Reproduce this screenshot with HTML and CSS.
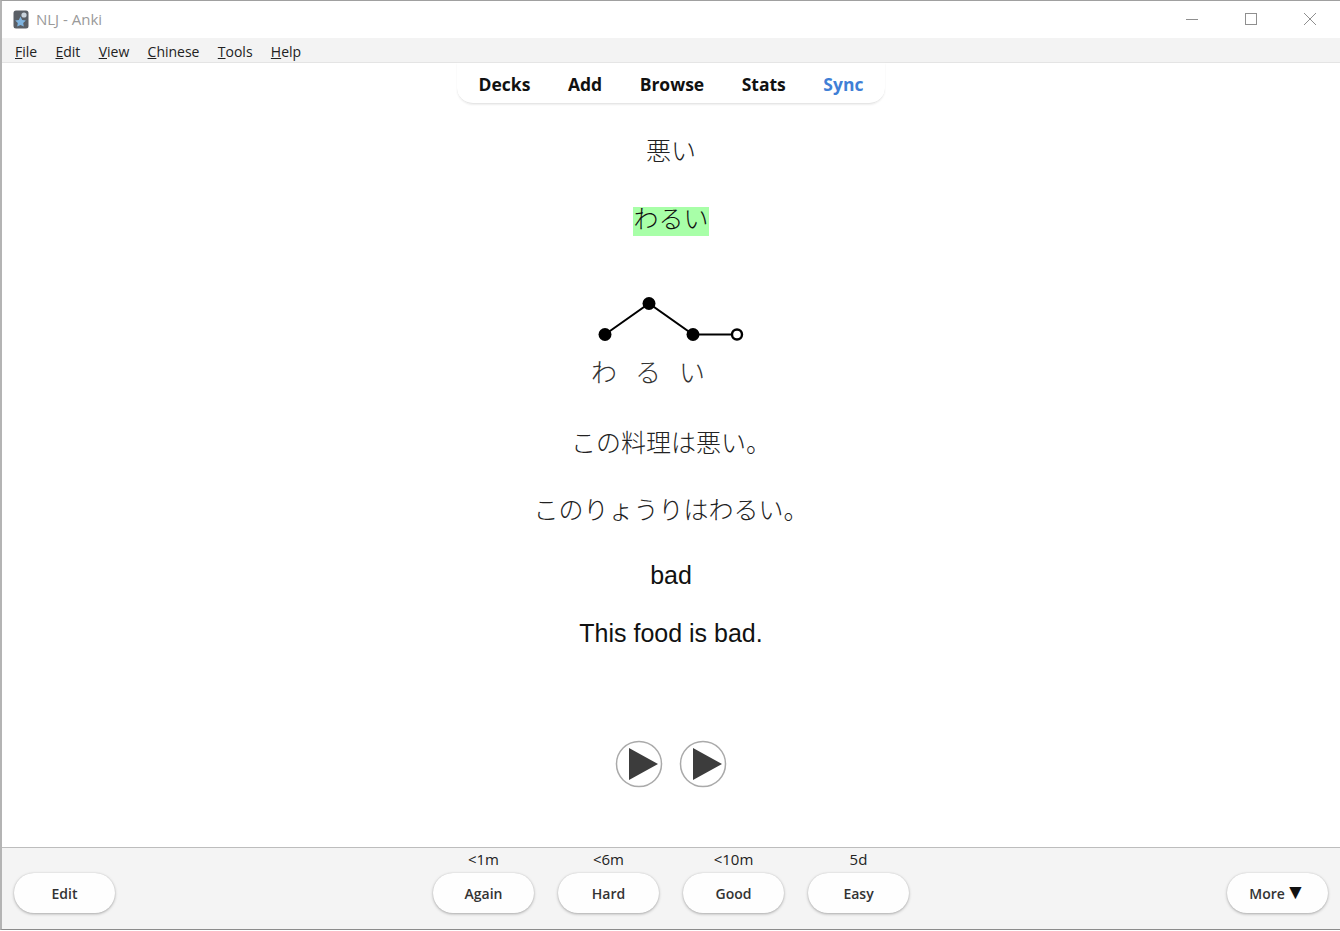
FILE: index.html
```html
<!DOCTYPE html>
<html lang="en">
<head>
<meta charset="utf-8">
<title>NLJ - Anki</title>
<link rel="stylesheet" href="styles.css">
</head>
<body>
<div class="window">

<div class="titlebar">
  <svg class="appicon" width="16" height="19" viewBox="0 0 16 19">
    <rect x="0.5" y="0.5" width="15" height="18" rx="2.5" fill="#5a5f66"/>
    <circle cx="11" cy="5" r="2.6" fill="#c9d3dc"/>
    <path d="M7.5 6.5l1.7 3.4 3.6.5-2.6 2.6.6 3.6-3.3-1.7-3.3 1.7.6-3.6-2.6-2.6 3.6-.5z" fill="#7fb4e0"/>
  </svg>
  <span class="wintitle">NLJ - Anki</span>
  <div class="winbtns">
    <svg width="12" height="12" viewBox="0 0 12 12"><path d="M0 6.5h12" stroke="#8f8f8f" fill="none"/></svg>
    <svg width="12" height="12" viewBox="0 0 12 12"><rect x="0.5" y="0.5" width="11" height="11" stroke="#8f8f8f" fill="none"/></svg>
    <svg width="12" height="12" viewBox="0 0 12 12"><path d="M0 0l12 12M12 0L0 12" stroke="#8f8f8f" fill="none"/></svg>
  </div>
</div>

<div class="menubar">
  <span class="menu"><u>F</u>ile</span>
  <span class="menu"><u>E</u>dit</span>
  <span class="menu"><u>V</u>iew</span>
  <span class="menu"><u>C</u>hinese</span>
  <span class="menu"><u>T</u>ools</span>
  <span class="menu"><u>H</u>elp</span>
</div>

<div class="toolbar">
  <div class="tabs">
    <a class="tab">Decks</a>
    <a class="tab">Add</a>
    <a class="tab">Browse</a>
    <a class="tab">Stats</a>
    <a class="tab sync">Sync</a>
  </div>
</div>

<div class="card">
  <div class="line word">悪い</div>
  <div class="line reading"><span class="hl">わるい</span></div>
  <svg class="pitch" width="160" height="108" viewBox="0 0 160 108">
    <path d="M14 46.5L58 15.5L102 46.5H146" stroke="#000" stroke-width="2" fill="none"/>
    <circle cx="14" cy="46.5" r="6.5" fill="#000"/>
    <circle cx="58" cy="15.5" r="6.5" fill="#000"/>
    <circle cx="102" cy="46.5" r="6.5" fill="#000"/>
    <circle cx="146" cy="46.5" r="5" fill="#fff" stroke="#000" stroke-width="2.4"/>
    <text class="pitchtext" x="13" y="94">わ</text>
    <text class="pitchtext" x="57" y="94">る</text>
    <text class="pitchtext" x="101" y="94">い</text>
  </svg>
  <div class="line sentence">この料理は悪い。</div>
  <div class="line sentence2">このりょうりはわるい。</div>
  <div class="line meaning">bad</div>
  <div class="line english">This food is bad.</div>
  <div class="replay">
    <svg width="48" height="48" viewBox="0 0 48 48">
      <circle cx="24" cy="24" r="22.5" fill="#fff" stroke="#aaa" stroke-width="1.5"/>
      <path d="M14 8L43 24L14 40z" fill="#3c3c3c"/>
    </svg>
    <svg width="48" height="48" viewBox="0 0 48 48">
      <circle cx="24" cy="24" r="22.5" fill="#fff" stroke="#aaa" stroke-width="1.5"/>
      <path d="M14 8L43 24L14 40z" fill="#3c3c3c"/>
    </svg>
  </div>
</div>

<div class="bottombar">
  <div class="side">
    <button class="btn">Edit</button>
  </div>
  <div class="answers">
    <div class="answer"><span class="due">&lt;1m</span><button class="btn">Again</button></div>
    <div class="answer"><span class="due">&lt;6m</span><button class="btn">Hard</button></div>
    <div class="answer"><span class="due">&lt;10m</span><button class="btn">Good</button></div>
    <div class="answer"><span class="due">5d</span><button class="btn">Easy</button></div>
  </div>
  <div class="side right">
    <button class="btn">More<span class="arrow">▼</span></button>
  </div>
</div>

</div>
</body>
</html>
```

FILE: styles.css
```css
html, body { margin: 0; padding: 0; background: #fff; }
body {
	font-family: "Open Sans", "Noto Sans", sans-serif;
	color: #111;
	overflow: hidden;
}

.window {
	box-sizing: border-box;
	width: 1340px;
	height: 930px;
	border-top: 1px solid #a0a0a0;
	border-left: 2px solid #b4b4b4;
	border-bottom: 1px solid #8c8c8c;
	display: flex;
	flex-direction: column;
}

/* title bar */
.titlebar {
	height: 37px;
	flex: none;
	display: flex;
	align-items: center;
	padding-left: 11px;
}
.appicon { margin-right: 7px; }
.wintitle { font-size: 15px; color: #9a9a9a; margin-bottom: 2px; }
.winbtns {
	margin-left: auto;
	margin-bottom: 2px;
	display: flex;
	gap: 47px;
	padding-right: 24px;
}

.menubar {
	height: 25px;
	flex: none;
	background: #f3f3f3;
	border-bottom: 1px solid #e4e4e4;
	display: flex;
	align-items: center;
	padding: 3px 0 0 13px;
	box-sizing: border-box;
	gap: 18.3px;
	font-size: 14px;
	color: #222;
}

/* deck browser links */
.toolbar { height: 41px; flex: none; display: flex; justify-content: center; }
.tabs {
	display: flex;
	align-items: center;
	height: 41px;
	padding: 1px 22px 0;
	gap: 37.5px;
	border-radius: 0 0 16px 16px;
	border-bottom: 1px solid #e6e6e6;
	box-shadow: 0 1px 2px #eee;
	box-sizing: border-box;
	font-size: 17.5px;
	font-weight: 700;
	color: #111;
}
.sync { color: #3f7fd6; }

/* the card */
.card {
	flex: 1;
	display: flex;
	flex-direction: column;
	align-items: center;
	font-family: "Noto Sans CJK JP", sans-serif;
	font-weight: 300;
	color: #222;
}
.line { font-size: 25px; line-height: 32px; text-align: center; }
.word { margin-top: 29px; }
.reading { margin-top: 36px; color: #111; }
.hl { background: #a8ffa8; display: inline-block; height: 29px; line-height: 21px; }
.pitch { margin-top: 52px; }
.pitchtext { font-size: 26px; text-anchor: middle; fill: #333; }
.sentence { margin-top: 29px; }
.sentence2 { margin-top: 35px; }
.meaning, .english {
	font-family: "Liberation Sans", Arial, sans-serif;
	font-weight: 400;
	color: #111;
}
.meaning { margin-top: 35px; }
.english { margin-top: 26px; }
.replay { display: flex; gap: 16px; margin-top: 91px; }
.replay svg { display: block; }

/* answer buttons */
.bottombar {
	height: 82px;
	flex: none;
	box-sizing: border-box;
	background: #f4f4f4;
	border-top: 1px solid #bdbdbd;
	display: flex;
	justify-content: space-between;
	align-items: flex-start;
	padding: 0 12px;
}
.side { width: 101px; padding-top: 25px; }
.answers { display: flex; gap: 24px; }
.answer { display: flex; flex-direction: column; align-items: center; }
.due { font-size: 15px; line-height: 23px; margin-bottom: 2px; color: #222; }
.btn {
	width: 101px;
	height: 40px;
	padding: 0;
	border: 0;
	border-radius: 20px;
	background: #fefefe;
	box-shadow: 0 1px 3px #a8a8a8, 0 0 1px #ccc;
	font-family: "Open Sans", "Noto Sans", sans-serif;
	font-size: 14px;
	font-weight: 600;
	color: #333;
}
.arrow { font-size: 21px; line-height: 14px; color: #111; }
```
